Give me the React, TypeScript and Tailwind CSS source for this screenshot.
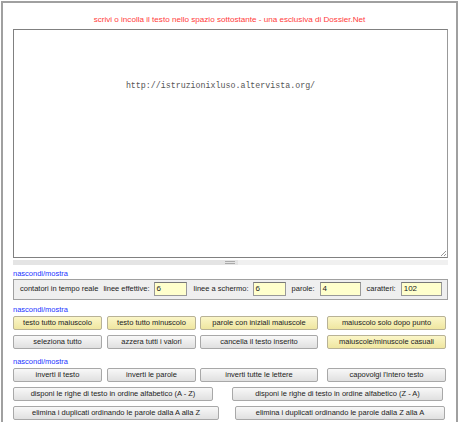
import React from "react";

const font = { fontFamily: '"Liberation Sans", Arial, sans-serif' };

function Btn({ children, yellow, w }: { children: React.ReactNode; yellow?: boolean; w: string }) {
  return (
    <div
      className={`${w} h-[14px] flex items-center justify-center border rounded-[2px] text-[7.5px] leading-none text-[#222] ${
        yellow
          ? "bg-gradient-to-b from-[#fbf6c8] to-[#efe6a0] border-[#b8b296]"
          : "bg-gradient-to-b from-[#f8f8f8] to-[#e0e0e0] border-[#a8a8a8]"
      }`}
    >
      {children}
    </div>
  );
}

function Field({ v, w }: { v: string; w: string }) {
  return (
    <div className={`${w} h-[14px] bg-[#ffffcc] border border-[#999] border-t-[#777] flex items-center px-[2px] text-[8px] text-[#222]`}>
      {v}
    </div>
  );
}

function Link() {
  return <div className="text-[7.5px] leading-none text-[#2233ff] ml-[10px]">nascondi/mostra</div>;
}

export default function App() {
  return (
    <div className="w-[460px] h-[422px] overflow-hidden bg-white" style={font}>
      <div className="ml-[1px] mt-[1px] w-[457px] h-[440px] border-l-2 border-t-2 border-r-2 border-[#a0a0a0] bg-white">
        <div className="pt-[13px] text-center text-[8.1px] leading-none text-[#ff3b3b]">
          scrivi o incolla il testo nello spazio sottostante - una esclusiva di Dossier.Net
        </div>
        <div className="ml-[10px] mt-[5px] w-[435px] h-[229px] border border-[#808080] border-r-[#999] bg-white relative flex justify-center pr-[20px]">
          <div
            className="mt-[52px] text-[8.3px] leading-none text-[#555]"
            style={{ fontFamily: '"Liberation Mono", "Courier New", monospace' }}
          >
            http://istruzionixluso.altervista.org/
          </div>
          <svg className="absolute right-[1px] bottom-[1px]" width="6" height="6" viewBox="0 0 6 6">
            <path d="M6 1 L1 6 M6 4 L4 6" stroke="#999" strokeWidth="1" />
          </svg>
        </div>
        <div className="ml-[10px] mt-[2px] w-[435px] h-[5px] flex relative">
          <div className="w-[225px] bg-[#e4e4e4]" />
          <div className="flex-1 bg-[#f0f0f0]" />
          <div className="absolute left-[212px] top-[1px] w-[10px] h-[3px] border-t border-b border-[#aaa]" />
        </div>
        <div className="mt-[5px]">
          <Link />
        </div>
        <div className="ml-[10px] mt-[1px] w-[435px] h-[21px] bg-[#efefef] border border-[#a0a0a0] flex items-center text-[7.5px] text-[#222]">
          <span className="ml-[6px]">contatori in tempo reale</span>
          <span className="ml-[5px]">linee effettive:</span>
          <div className="ml-[4px]"><Field v="6" w="w-[33px]" /></div>
          <span className="ml-[7px]">linee a schermo:</span>
          <div className="ml-[4px]"><Field v="6" w="w-[33px]" /></div>
          <span className="ml-[6px]">parole:</span>
          <div className="ml-[5px]"><Field v="4" w="w-[41px]" /></div>
          <span className="ml-[6px]">caratteri:</span>
          <div className="ml-[5px]"><Field v="102" w="w-[41px]" /></div>
        </div>
        <div className="mt-[6px]">
          <Link />
        </div>
        <div className="ml-[10px] mt-[3px] flex flex-col gap-[5px]">
          <div className="flex">
            <Btn yellow w="w-[89px]">testo tutto maiuscolo</Btn>
            <div className="ml-[5px]"><Btn yellow w="w-[89px]">testo tutto minuscolo</Btn></div>
            <div className="ml-[4px]"><Btn yellow w="w-[118px]">parole con iniziali maiuscole</Btn></div>
            <div className="ml-[9px]"><Btn yellow w="w-[119px]">maiuscolo solo dopo punto</Btn></div>
          </div>
          <div className="flex">
            <Btn w="w-[89px]">seleziona tutto</Btn>
            <div className="ml-[5px]"><Btn w="w-[89px]">azzera tutti i valori</Btn></div>
            <div className="ml-[4px]"><Btn w="w-[118px]">cancella il testo inserito</Btn></div>
            <div className="ml-[9px]"><Btn yellow w="w-[119px]">maiuscole/minuscole casuali</Btn></div>
          </div>
        </div>
        <div className="mt-[9px]">
          <Link />
        </div>
        <div className="ml-[10px] mt-[2px] flex flex-col gap-[5px]">
          <div className="flex">
            <Btn w="w-[89px]">inverti il testo</Btn>
            <div className="ml-[5px]"><Btn w="w-[89px]">inverti le parole</Btn></div>
            <div className="ml-[4px]"><Btn w="w-[118px]">inverti tutte le lettere</Btn></div>
            <div className="ml-[9px]"><Btn w="w-[119px]">capovolgi l'intero testo</Btn></div>
          </div>
          <div className="flex">
            <Btn w="w-[200px]">disponi le righe di testo in ordine alfabetico (A - Z)</Btn>
            <div className="ml-[19px]"><Btn w="w-[211px]">disponi le righe di testo in ordine alfabetico (Z - A)</Btn></div>
          </div>
          <div className="flex">
            <Btn w="w-[206px]">elimina i duplicati ordinando le parole dalla A alla Z</Btn>
            <div className="ml-[16px]"><Btn w="w-[210px]">elimina i duplicati ordinando le parole dalla Z alla A</Btn></div>
          </div>
        </div>
      </div>
    </div>
  );
}
